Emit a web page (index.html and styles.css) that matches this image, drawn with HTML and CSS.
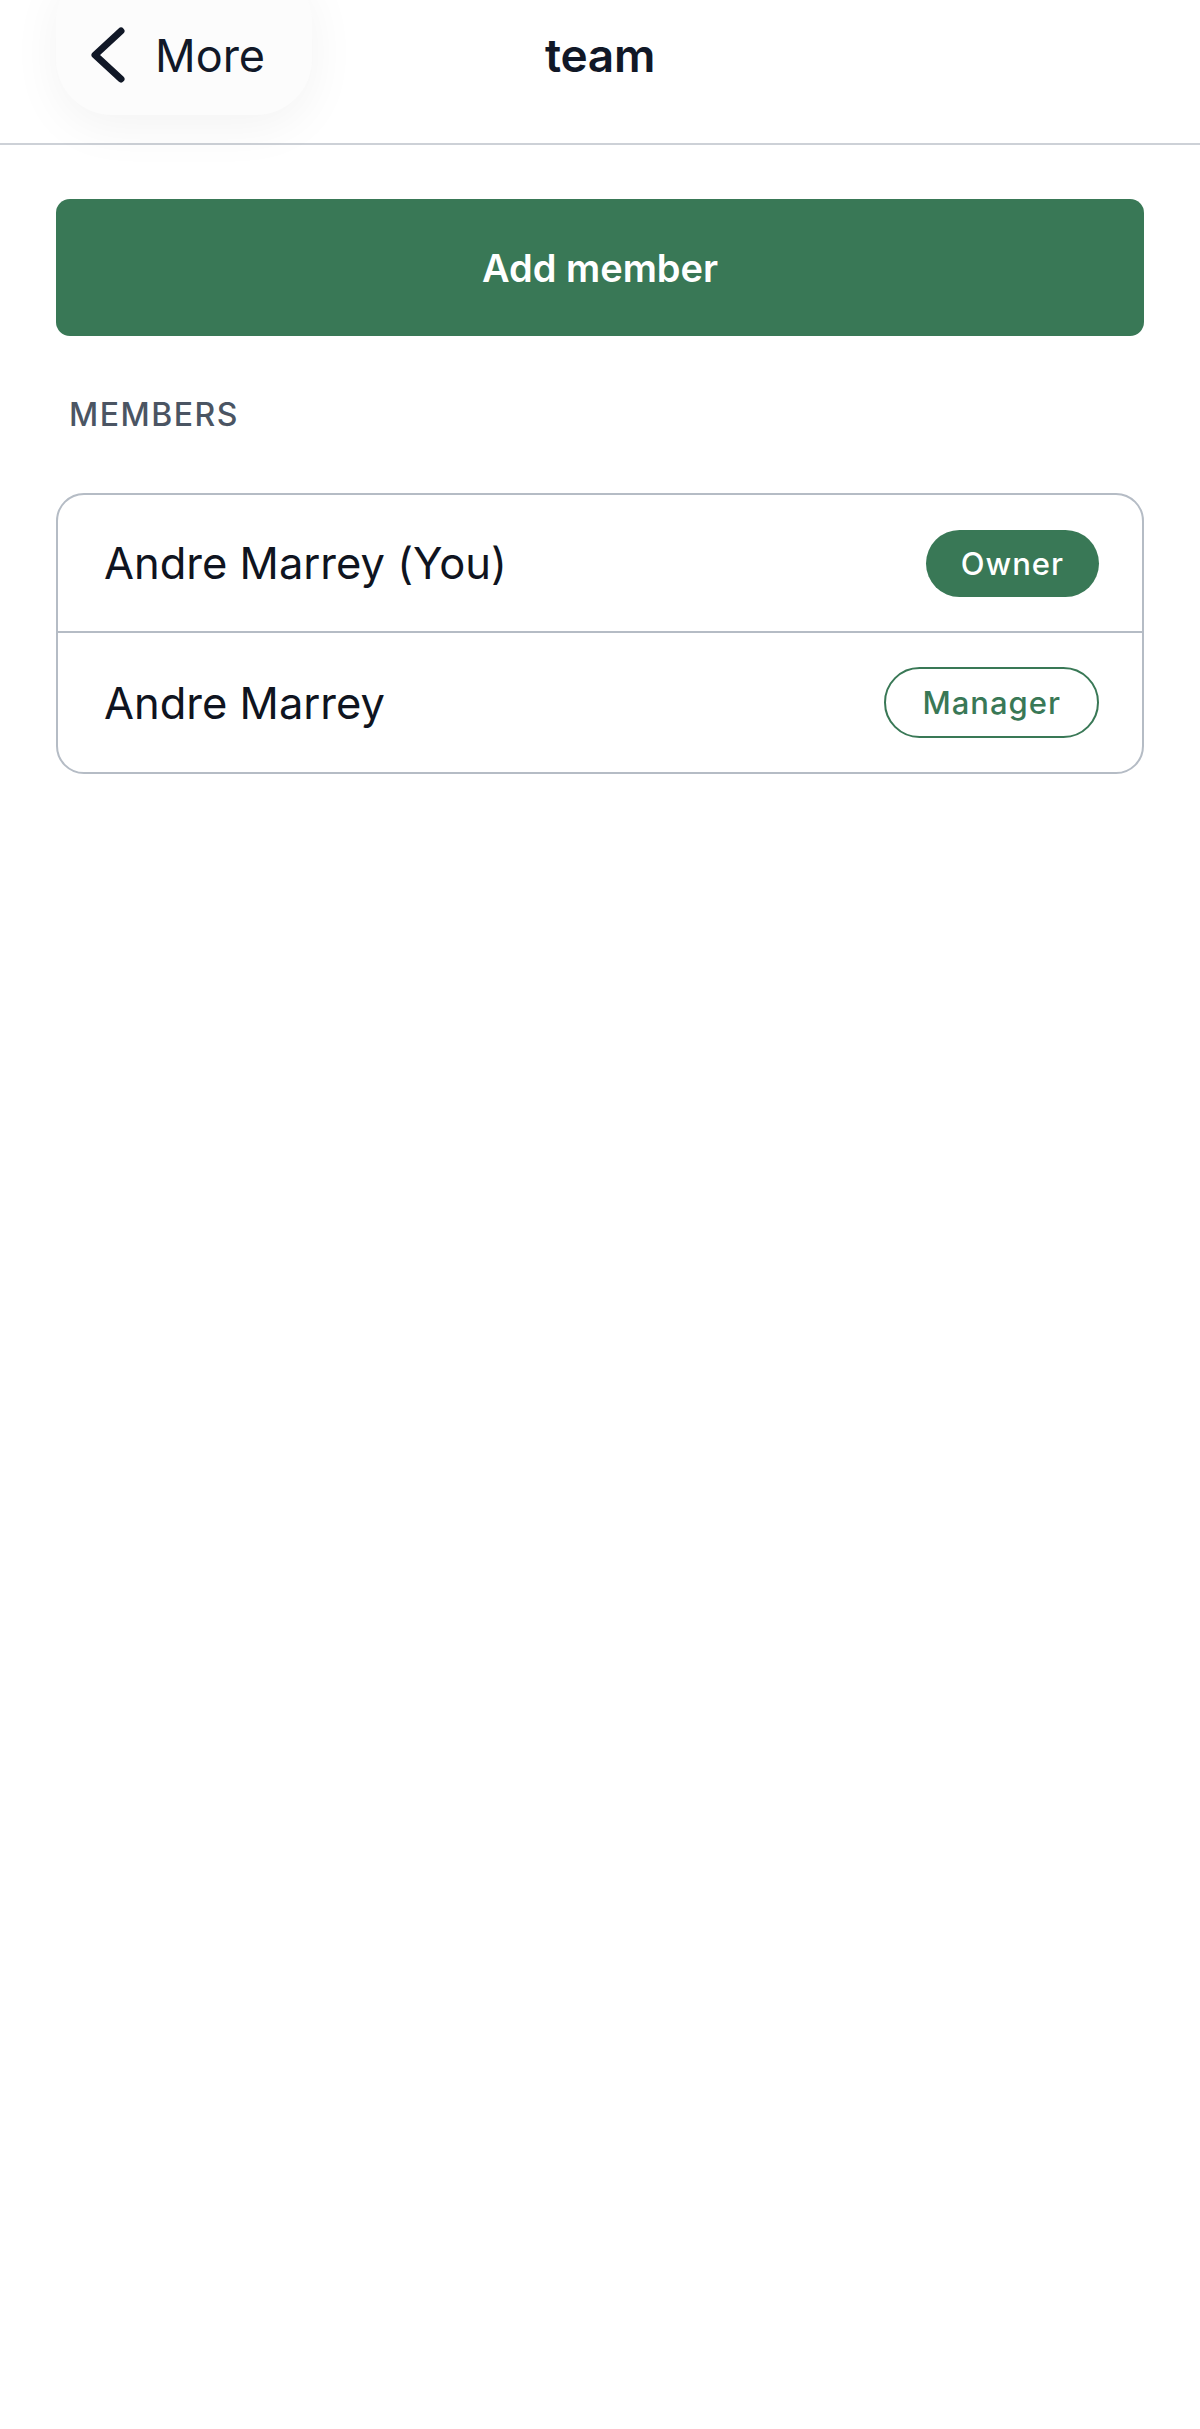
FILE: index.html
```html
<!DOCTYPE html>
<html lang="en">
<head>
    <meta charset="UTF-8">
    <meta name="viewport" content="width=device-width, initial-scale=1">
    <title>team</title>
    <link rel="stylesheet" href="styles.css">
</head>
<body>
    <header class="topbar">
        <div class="topbar-left">
            <a class="back" href="#">
                <svg class="back-icon" width="36" height="56" viewBox="0 0 36 56" aria-hidden="true">
                    <path d="M31 4 L5 28 L31 52" fill="none" stroke="#111827" stroke-width="7" stroke-linecap="round" stroke-linejoin="round"/>
                </svg>
                <span>More</span>
            </a>
        </div>
        <h1 class="title">team</h1>
        <div></div>
    </header>

    <main class="content">
        <button class="add-btn">Add member</button>

        <h2 class="section-label">MEMBERS</h2>

        <ul class="members">
            <li class="member">
                <span class="member-name">Andre Marrey (You)</span>
                <span class="badge badge-owner">Owner</span>
            </li>
            <li class="member">
                <span class="member-name">Andre Marrey</span>
                <span class="badge badge-manager">Manager</span>
            </li>
        </ul>
    </main>
</body>
</html>
```

FILE: styles.css
```css
body {
    margin: 0;
    padding: 0;
    background: #fff;
    font-family: Inter, "Noto Sans", sans-serif;
    color: #111827;
    min-height: 2429px;
    overflow: hidden;
}

.topbar {
    display: grid;
    grid-template-columns: 1fr auto 1fr;
    height: 143px;
    border-bottom: 2px solid #cdd1d7;
    background: #fff;
}

.topbar-left {
    padding-left: 56px;
}

.back {
    display: inline-flex;
    align-items: center;
    box-sizing: border-box;
    width: 256px;
    height: 150px;
    margin-top: -35px;
    padding: 30px 0 0 34px;
    border-radius: 56px;
    background: #fcfcfc;
    box-shadow: 0 12px 50px rgba(0, 0, 0, 0.05);
    color: #111827;
    text-decoration: none;
    font-size: 45px;
    position: relative;
    z-index: 1;
}

.back-icon {
    margin-right: 29px;
}

.title {
    margin: 27px 0 0;
    font-size: 46px;
    font-weight: 600;
    line-height: 56px;
    letter-spacing: -0.3px;
}

.content {
    padding: 0 56px;
}

.add-btn {
    display: block;
    width: 100%;
    height: 137px;
    margin-top: 54px;
    border: none;
    border-radius: 14px;
    background: #397856;
    color: #fff;
    font-family: inherit;
    font-size: 38px;
    font-weight: 600;
    cursor: pointer;
}

.section-label {
    margin: 59px 0 0;
    padding-left: 13px;
    font-size: 32px;
    font-weight: 500;
    line-height: 40px;
    letter-spacing: 1.5px;
    color: #4b5563;
}

.members {
    list-style: none;
    margin: 58px 0 0;
    padding: 0;
    border: 2px solid #b5bcc5;
    border-radius: 28px;
}

.member {
    display: flex;
    align-items: center;
    justify-content: space-between;
    height: 136px;
    padding: 0 43px 0 46px;
}

.member + .member {
    border-top: 2px solid #b5bcc5;
    height: 139px;
}

.member-name {
    font-size: 43.5px;
    color: #0f1420;
}

.badge {
    display: inline-block;
    height: 67px;
    line-height: 67px;
    padding: 0 35px;
    border-radius: 40px;
    font-size: 31px;
    font-weight: 500;
    letter-spacing: 1px;
}

.badge-owner {
    background: #397856;
    color: #fff;
}

.badge-manager {
    border: 2px solid #397856;
    color: #397856;
    padding: 0 36px;
}
```
